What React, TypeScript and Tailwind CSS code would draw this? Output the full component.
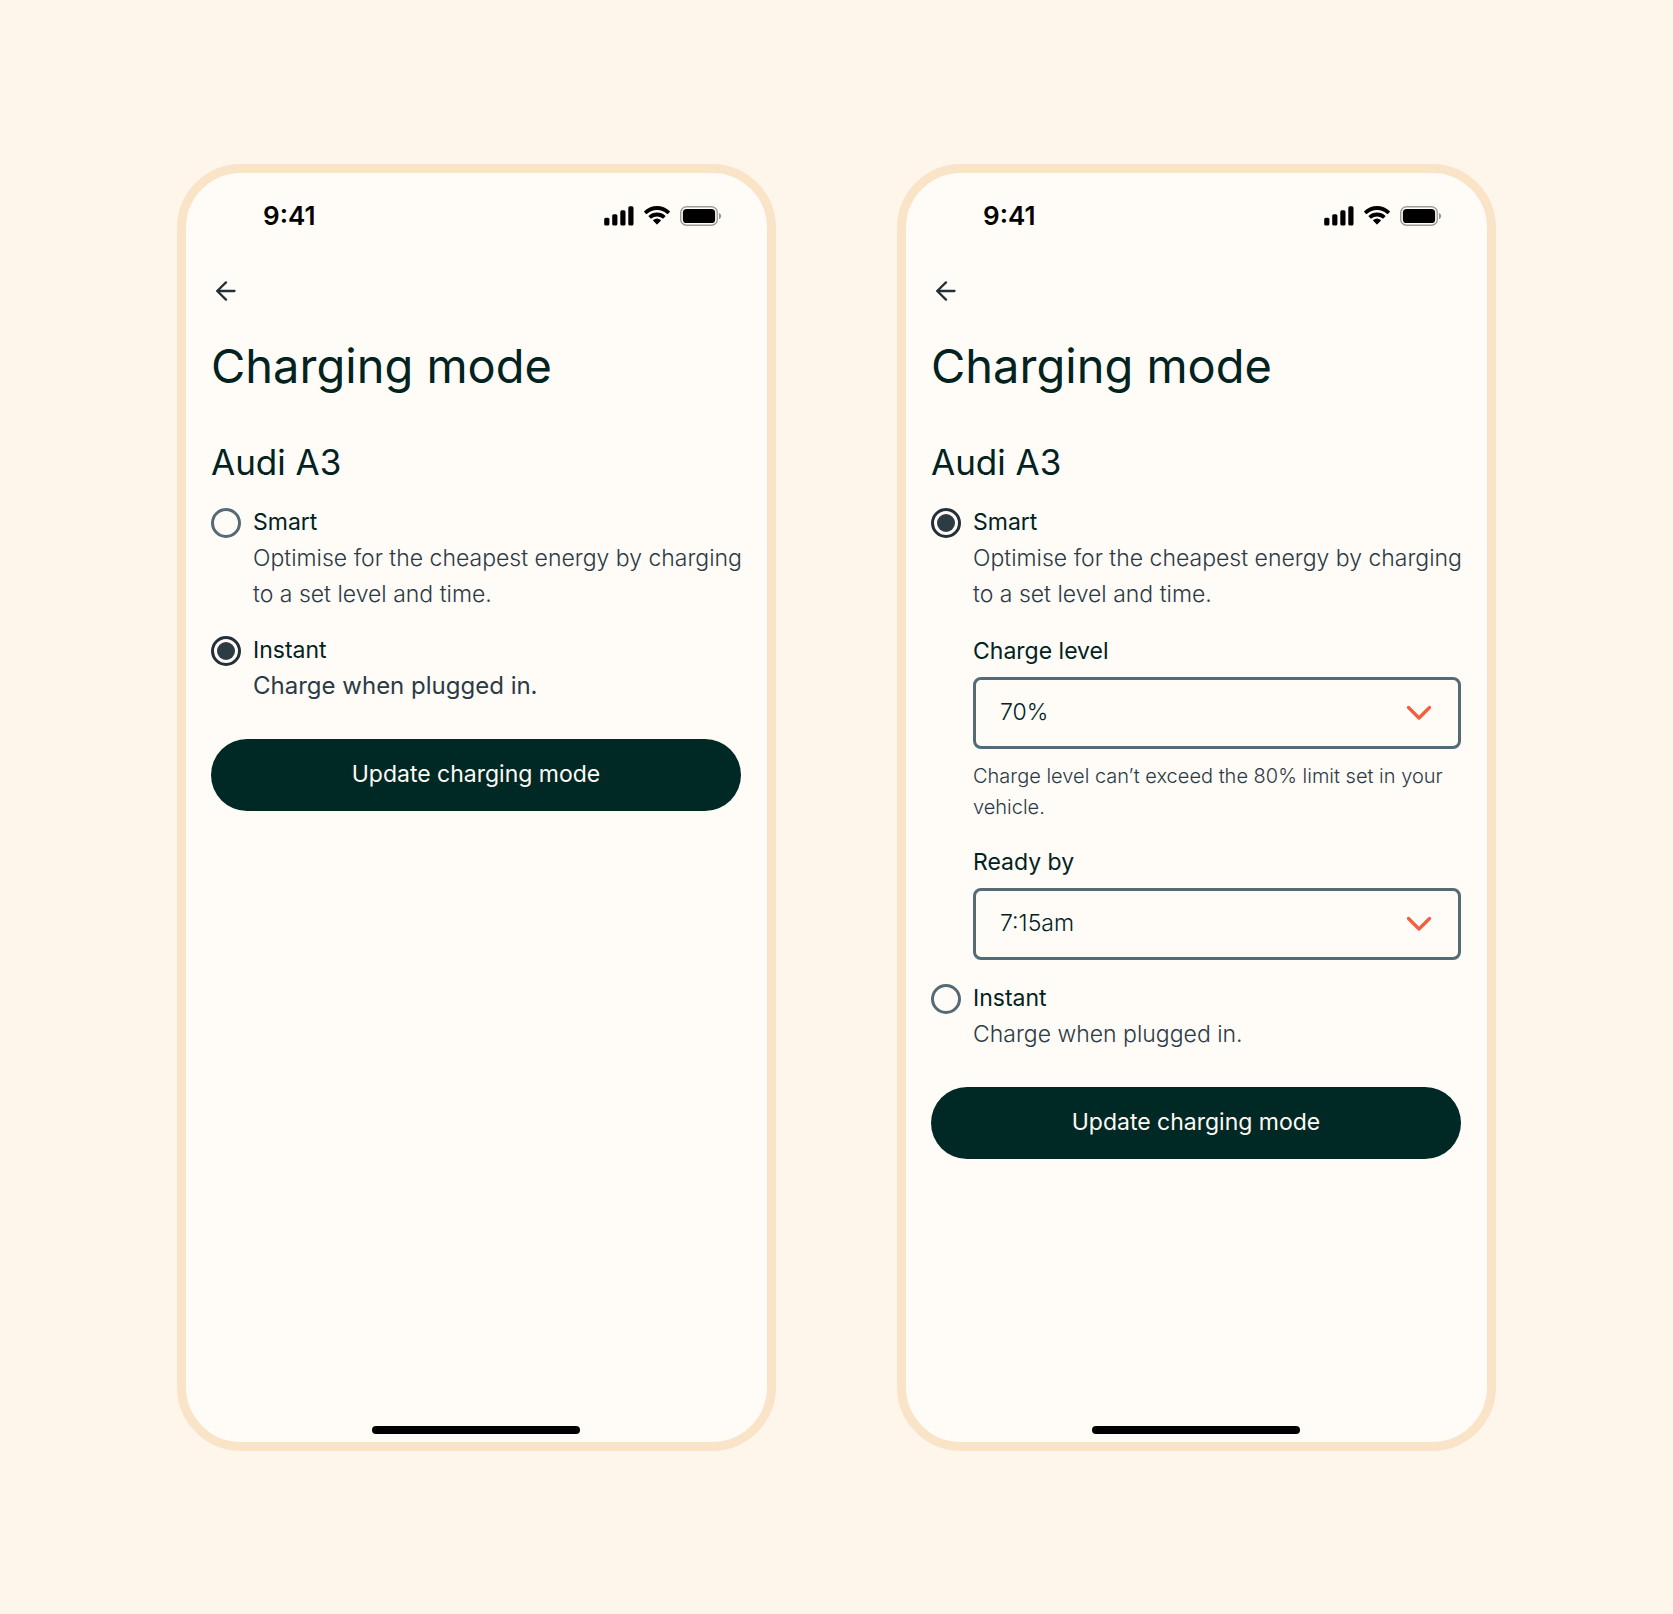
import { useId, useState } from "react";

type Mode = "smart" | "instant";

function SignalIcon() {
  return (
    <svg width="30" height="20" viewBox="0 0 30 20" fill="currentColor" aria-hidden="true">
      <rect x="0.2" y="11.7" width="5.2" height="7.8" rx="1.6" />
      <rect x="8.2" y="8.2" width="5.2" height="11.3" rx="1.6" />
      <rect x="16.3" y="4.3" width="5.2" height="15.2" rx="1.6" />
      <rect x="24.3" y="0.3" width="5.2" height="19.2" rx="1.6" />
    </svg>
  );
}

function WifiIcon() {
  return (
    <svg width="26" height="19" viewBox="0 0 17 12.4" fill="currentColor" aria-hidden="true">
      <path d="M8.5 2.6c2.47 0 4.84.95 6.63 2.65.13.13.35.13.49 0l1.28-1.3a.36.36 0 0 0 0-.52C12.2-1.1 4.8-1.1.1 3.43a.36.36 0 0 0 0 .52l1.29 1.3c.13.13.35.13.48 0A9.6 9.6 0 0 1 8.5 2.6Z" />
      <path d="M8.5 6.8c1.36 0 2.66.5 3.66 1.4.14.13.35.13.49 0l1.28-1.31a.37.37 0 0 0 0-.53 7.9 7.9 0 0 0-10.85 0 .37.37 0 0 0 0 .53l1.28 1.3c.14.14.36.14.49.01 1-.9 2.3-1.4 3.65-1.4Z" />
      <path d="M11.01 9.66c.14-.14.14-.38 0-.52a3.98 3.98 0 0 0-5.02 0c-.15.14-.15.38 0 .52l2.26 2.3c.14.15.37.15.5 0l2.26-2.3Z" />
    </svg>
  );
}

function BatteryIcon() {
  return (
    <svg width="42" height="20" viewBox="0 0 42 20" fill="none" aria-hidden="true">
      <rect x="0.7" y="0.7" width="36.6" height="18.6" rx="5.8" stroke="#000" strokeOpacity="0.38" strokeWidth="1.4" />
      <path d="M39 7v6.2a3.3 3.3 0 0 0 0-6.2Z" fill="#000" fillOpacity="0.42" />
      <rect x="2.9" y="3" width="32.2" height="14" rx="3.6" fill="#000" />
    </svg>
  );
}

function BackIcon() {
  return (
    <svg width="20" height="20" viewBox="0 0 20 20" fill="none" stroke="currentColor" strokeWidth="2.3" strokeLinecap="round" strokeLinejoin="round" aria-hidden="true">
      <path d="M18.5 10H1.2M10 1.4L1.2 10L10 18.6" />
    </svg>
  );
}

function Chevron() {
  return (
    <svg className="pointer-events-none absolute top-1/2 right-[29px] -translate-y-1/2" width="26" height="16" viewBox="0 0 26 16" fill="none" stroke="#f55d3e" strokeWidth="3.2" strokeLinecap="round" strokeLinejoin="round" aria-hidden="true">
      <path d="M2.5 2.5L13 13L23.5 2.5" />
    </svg>
  );
}

function SelectField({ label, options, hint }: { label: string; options: string[]; hint?: string }) {
  const id = useId();
  return (
    <div>
      <label htmlFor={id} className="block text-[23px] leading-9 text-[#00231f]">
        {label}
      </label>
      <div className="relative mt-2">
        <select
          id={id}
          defaultValue={options[0]}
          className="block h-[72px] w-full appearance-none rounded-lg border-3 border-[#546a75] bg-transparent px-6 text-[23px] font-light text-[#00231f]"
        >
          {options.map((option) => (
            <option key={option}>{option}</option>
          ))}
        </select>
        <Chevron />
      </div>
      {hint && <p className="mt-3 text-xl leading-[31px] font-light text-[#2b3a45]">{hint}</p>}
    </div>
  );
}

interface OptionProps {
  name: string;
  title: string;
  description: string;
  checked: boolean;
  emphasised?: boolean;
  onSelect: () => void;
}

function ModeOption({ name, title, description, checked, emphasised, onSelect }: OptionProps) {
  return (
    <label className="-mr-2 flex gap-3">
      <input
        type="radio"
        name={name}
        checked={checked}
        onChange={onSelect}
        className="mt-[3px] size-[30px] shrink-0 appearance-none rounded-full border-3 border-[#546a75] bg-clip-content p-[3px] checked:border-[#22303a] checked:bg-[#2d3b43]"
      />
      <span className="leading-9">
        <span className="block text-[23px] leading-[35px] text-[#00231f]">{title}</span>
        <span className={emphasised ? "block text-2xl leading-9 text-[#2b3a45]" : "block text-[23px] font-light text-[#2b3a45]"}>
          {description}
        </span>
      </span>
    </label>
  );
}

function Phone({ initialMode }: { initialMode: Mode }) {
  const [mode, setMode] = useState<Mode>(initialMode);
  const group = useId();
  return (
    <section className="flex aspect-[599/1287] max-w-[599px] flex-1 flex-col rounded-[64px] border-9 border-[#fae4c8] bg-[#fffbf6] pr-[26px] pl-[25px] pb-2">
      <header className="flex items-center justify-between pt-7 pr-[19px] pl-[52px] text-black">
        <span className="text-[26px] leading-[30px] font-semibold">9:41</span>
        <div className="flex items-center gap-2.5">
          <SignalIcon />
          <WifiIcon />
          <BatteryIcon />
        </div>
      </header>
      <button type="button" aria-label="Back" className="mt-[45px] flex size-[30px] items-center justify-center text-[#22303a]">
        <BackIcon />
      </button>
      <h1 className="mt-8 text-[47px] leading-[56px] text-[#00231f]">Charging mode</h1>
      <h2 className="mt-12 text-[35px] leading-10 text-[#00231f]">Audi A3</h2>
      <form className="mt-[23px] flex flex-col" onSubmit={(event) => event.preventDefault()}>
        <ModeOption
          name={group}
          title="Smart"
          description="Optimise for the cheapest energy by charging to a set level and time."
          checked={mode === "smart"}
          onSelect={() => setMode("smart")}
        />
        {mode === "smart" && (
          <div className="mt-[21px] flex flex-col gap-[21px] pl-[42px]">
            <SelectField
              label="Charge level"
              options={["70%", "60%", "50%"]}
              hint="Charge level can’t exceed the 80% limit set in your vehicle."
            />
            <SelectField label="Ready by" options={["7:15am", "7:30am", "7:45am"]} />
          </div>
        )}
        <div className="mt-[21px]">
          <ModeOption
            name={group}
            title="Instant"
            description="Charge when plugged in."
            checked={mode === "instant"}
            emphasised={mode === "instant"}
            onSelect={() => setMode("instant")}
          />
        </div>
        <button type="submit" className="mt-[35px] h-[72px] rounded-full bg-[#002824] text-[23px] text-[#fffbf6]">
          Update charging mode
        </button>
      </form>
      <div className="mx-auto mt-auto h-2 w-[208px] rounded-full bg-black" />
    </section>
  );
}

export default function App() {
  return (
    <main className="flex min-h-screen items-center justify-center gap-[121px] bg-[#fef5eb] px-8 font-['Inter',sans-serif]">
      <Phone initialMode="instant" />
      <Phone initialMode="smart" />
    </main>
  );
}
